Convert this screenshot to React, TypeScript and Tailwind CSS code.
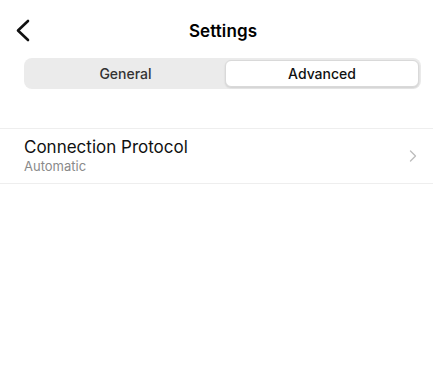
import { ChevronRight } from "lucide-react";

export default function App() {
  return (
    <div className="h-[382px] w-[433px] bg-white font-['Inter',sans-serif] text-black">
      {/* Header */}
      <div className="relative flex h-[58px] justify-center pl-[13px] pt-[20px]">
        <button className="absolute left-[15px] top-[19px]">
          <svg width="16" height="23" viewBox="0 0 16 23" fill="none">
            <path d="M13 2 L3 11.5 L13 21" stroke="#111" strokeWidth="2.6" strokeLinecap="round" strokeLinejoin="round" />
          </svg>
        </button>
        <h1 className="text-[17px] font-semibold leading-[22px] tracking-[0.1px]">Settings</h1>
      </div>

      {/* Segmented control */}
      <div className="ml-[24px] mr-[12px] flex h-[31px] rounded-[8px] bg-[#ebebeb] p-[2px]">
        <button className="flex flex-1 items-center justify-center text-[14px] font-medium text-[#333]">
          General
        </button>
        <button className="flex w-[194px] items-center justify-center rounded-[6px] border border-[#d9d9d9] bg-white text-[14px] font-medium text-[#111] shadow-[0_1px_2px_rgba(0,0,0,0.12)]">
          Advanced
        </button>
      </div>

      {/* List */}
      <div className="mt-[39px] border-y border-[#eeeeee]">
        <button className="flex w-full items-center justify-between pl-[24px] pr-[10px] py-[8px] text-left">
          <div className="flex flex-col">
            <span className="text-[17px] leading-[21px] text-[#111]">Connection Protocol</span>
            <span className="text-[13px] leading-[17px] text-[#8a8a8a]">Automatic</span>
          </div>
          <ChevronRight className="h-[20px] w-[20px] text-[#bdbdbd]" strokeWidth={1.6} />
        </button>
      </div>
    </div>
  );
}
